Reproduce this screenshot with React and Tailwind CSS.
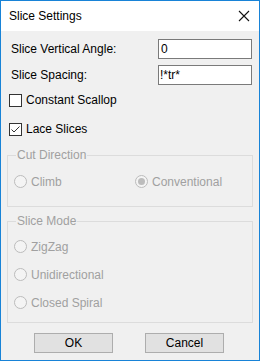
import React from 'react';

const font = { fontFamily: '"Liberation Sans", Arial, sans-serif' };

const Check = ({ checked, label }) => (
  <div className="flex items-center h-[14px]">
    <div className="w-[13px] h-[13px] border border-[#333333] bg-white flex items-center justify-center">
      {checked && (
        <svg width="11" height="11" viewBox="0 0 11 11">
          <path d="M1.5 5.5 L4 8 L9.5 2.5" stroke="#333333" strokeWidth="1" fill="none" />
        </svg>
      )}
    </div>
    <span className="ml-[4px] text-[12px] text-black leading-none">{label}</span>
  </div>
);

const Radio = ({ checked, label }) => (
  <div className="flex items-center h-[13px]">
    <div className="w-[13px] h-[13px] rounded-full border border-[#bcbcbc] bg-[#f4f4f4] flex items-center justify-center">
      {checked && <div className="w-[7px] h-[7px] rounded-full bg-[#bcbcbc]" />}
    </div>
    <span className="ml-[4px] text-[12px] text-[#a0a0a0] leading-none">{label}</span>
  </div>
);

const Group = ({ title, children, className }) => (
  <fieldset className={`mx-[6px] border border-[#dcdcdc] px-[6px] ${className}`}>
    <legend className="ml-[2px] px-[1px] text-[12px] text-[#a0a0a0] leading-none">{title}</legend>
    {children}
  </fieldset>
);

export default function App() {
  return (
    <div className="w-[260px] h-[361px] border border-[#1883d7] flex flex-col bg-white" style={font}>
      <div className="h-[30px] bg-white flex items-center justify-between pl-[8px] pr-[9px]">
        <span className="text-[12px] text-black">Slice Settings</span>
        <svg width="12" height="12" viewBox="0 0 12 12">
          <path d="M1 1 L11 11 M11 1 L1 11" stroke="#111111" strokeWidth="1.1" />
        </svg>
      </div>
      <div className="flex-1 bg-[#f0f0f0] flex flex-col">
        <div className="flex items-center justify-between pl-[10px] pr-[7px] mt-[8px]">
          <span className="text-[12px] text-black">Slice Vertical Angle:</span>
          <div className="w-[94px] h-[20px] border border-[#7a7a7a] bg-white flex items-center px-[2px] text-[12px] text-black">0</div>
        </div>
        <div className="flex items-center justify-between pl-[10px] pr-[7px] mt-[6px]">
          <span className="text-[12px] text-black">Slice Spacing:</span>
          <div className="w-[94px] h-[20px] border border-[#7a7a7a] bg-white flex items-center px-[1px] text-[12px] text-black">!*tr*</div>
        </div>
        <div className="pl-[8px] mt-[8px]">
          <Check label="Constant Scallop" />
        </div>
        <div className="pl-[8px] mt-[15px]">
          <Check checked label="Lace Slices" />
        </div>
        <Group title="Cut Direction" className="mt-[13px] h-[58px]">
          <div className="flex mt-[14px]">
            <div className="w-[121px]">
              <Radio label="Climb" />
            </div>
            <Radio checked label="Conventional" />
          </div>
        </Group>
        <Group title="Slice Mode" className="mt-[8px] h-[108px]">
          <div className="flex flex-col mt-[13px] gap-[15px]">
            <Radio label="ZigZag" />
            <Radio label="Unidirectional" />
            <Radio label="Closed Spiral" />
          </div>
        </Group>
        <div className="flex mt-[10px] pl-[33px] gap-[32px]">
          <button className="w-[79px] h-[20px] border border-[#adadad] bg-[#e1e1e1] text-[12px] text-black leading-none">OK</button>
          <button className="w-[79px] h-[20px] border border-[#adadad] bg-[#e1e1e1] text-[12px] text-black leading-none">Cancel</button>
        </div>
      </div>
    </div>
  );
}
